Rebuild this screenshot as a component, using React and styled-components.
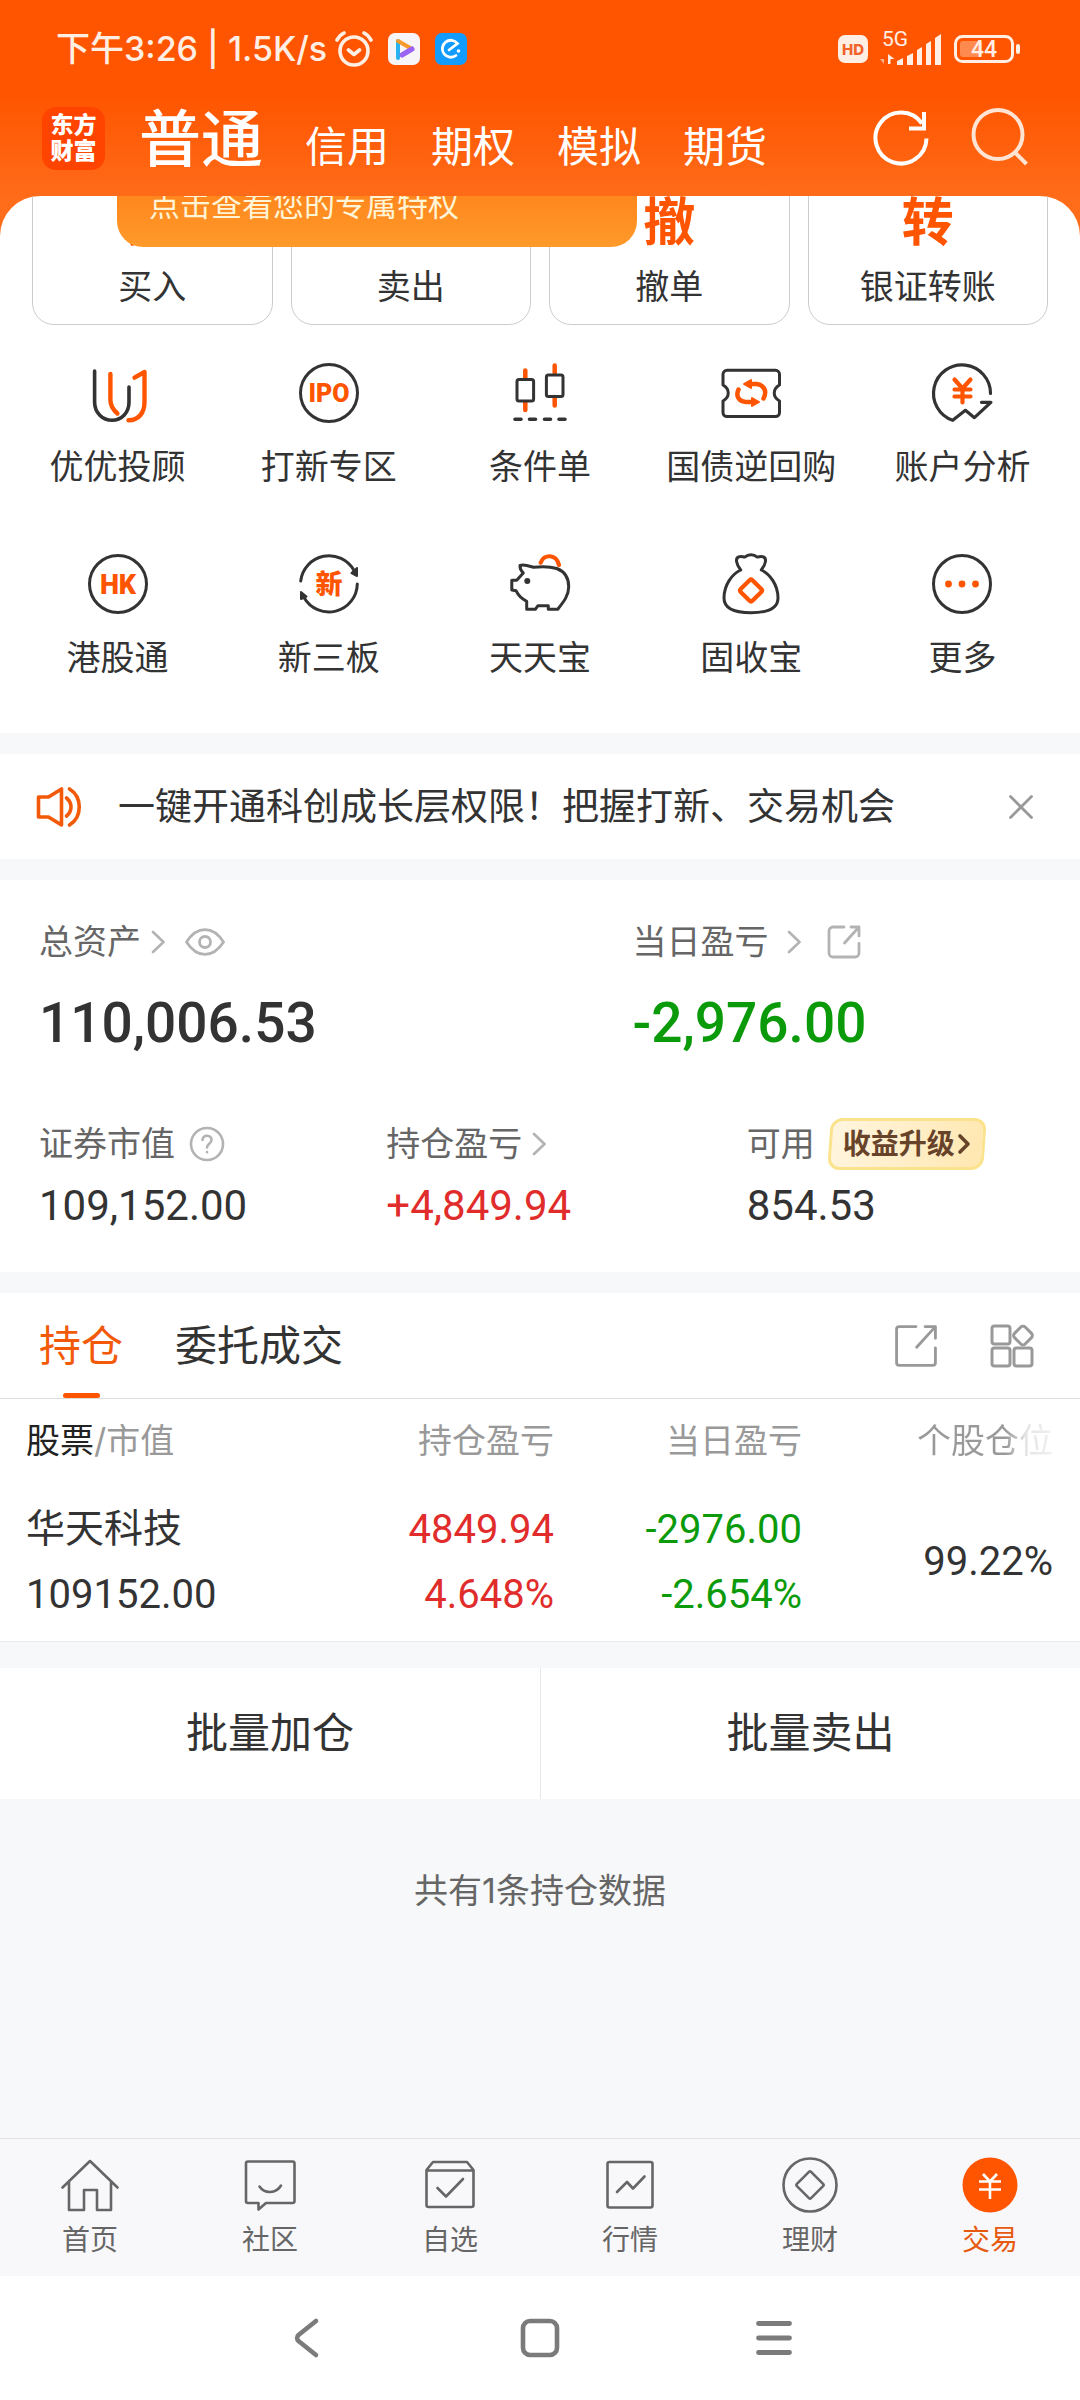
import React from "react";
import styled, { createGlobalStyle } from "styled-components";

const ORANGE = "#ff5500";
const INK = "#333333";
const GREY = "#666666";
const MUTED = "#999999";
const RED = "#e12c2c";
const GREEN = "#0a9a0a";
const NUMERIC = `Roboto, "Noto Sans CJK SC", sans-serif`;

const GlobalStyle = createGlobalStyle`
  * { box-sizing: border-box; }
  body {
    margin: 0;
    background: #f7f8fa;
    color: ${INK};
    font-family: Inter, "Noto Sans CJK SC", sans-serif;
  }
  button {
    margin: 0; padding: 0; border: 0; background: none;
    font: inherit; color: inherit; cursor: pointer;
  }
  a { color: inherit; text-decoration: none; }
  p, h1, h2 { margin: 0; font-weight: 400; }
  svg { display: block; flex: none; }
`;

const Page = styled.div`
  min-height: 100vh;
  display: flex;
  flex-direction: column;
`;

const Top = styled.div`
  background: linear-gradient(#ff5500 0, #ff5500 96px, #ff6c1a 200px, #ff6c1a 100%);
`;

const StatusBar = styled.div`
  height: 98px;
  padding: 0 60px 0 56px;
  display: flex;
  align-items: center;
  justify-content: space-between;
  color: #ffeee4;
  font-size: 34px;
  line-height: 40px;
  font-weight: 500;
`;

const StatusGroup = styled.div`
  display: flex;
  align-items: center;
  gap: ${(p) => p.$gap}px;
`;

const TitleBar = styled.header`
  height: 98px;
  padding: 0 50px 18px 42px;
  display: flex;
  align-items: center;
  color: #fff;
`;

const Logo = styled.a`
  width: 63px;
  height: 63px;
  border-radius: 14px;
  background: #ff4400;
  display: flex;
  align-items: center;
  justify-content: center;
  text-align: center;
  font-size: 23px;
  line-height: 26px;
  font-weight: 900;
`;

const Accounts = styled.nav`
  flex: 1;
  margin-left: 34px;
  padding-top: 10px;
  display: flex;
  align-items: baseline;
  gap: 42px;
  line-height: 80px;
`;

const AccountTab = styled.a`
  font-size: ${(p) => (p.$active ? 62 : 42)}px;
  font-weight: ${(p) => (p.$active ? 500 : 400)};
`;

const HeaderActions = styled.div`
  display: flex;
  gap: 39px;
`;

const Sheet = styled.section`
  position: relative;
  overflow: hidden;
  border-radius: 40px 40px 0 0;
  background: #fff;
  padding-bottom: 53px;
`;

const Promo = styled.a`
  position: absolute;
  top: -35px;
  left: 117px;
  width: 520px;
  height: 86px;
  padding-left: 32px;
  border-radius: 26px;
  background: linear-gradient(#ff7a14, #ff9a2a);
  color: #fff4d6;
  font-size: 31px;
  line-height: 88px;
`;

const TradeRow = styled.div`
  margin-top: -46px;
  padding: 0 32px;
  display: grid;
  grid-template-columns: repeat(4, 1fr);
  gap: 18px;
`;

const TradeCard = styled.button`
  padding: 46px 0 15px;
  border: 1px solid #cccccc;
  border-radius: 22px;
  display: flex;
  flex-direction: column;
  align-items: center;
  gap: 16px;
  font-size: 34px;
  line-height: 44px;
`;

const TradeGlyph = styled.span`
  color: ${ORANGE};
  font-size: 52px;
  line-height: 52px;
  font-weight: 700;
`;

const Shortcuts = styled.div`
  margin-top: 36px;
  padding: 0 12px;
  display: grid;
  grid-template-columns: repeat(5, 1fr);
  row-gap: 63px;
`;

const Shortcut = styled.button`
  display: flex;
  flex-direction: column;
  align-items: center;
  gap: 20px;
  font-size: 34px;
  line-height: 44px;
  white-space: nowrap;
`;

const Notice = styled.section`
  margin-top: 21px;
  height: 105px;
  padding: 0 46px 0 36px;
  display: flex;
  align-items: center;
  gap: 36px;
  background: #fff;
  font-size: 37px;
  line-height: 44px;
`;

const NoticeText = styled.a`
  flex: 1;
`;

const Assets = styled.section`
  margin-top: 21px;
  padding: 40px 40px 44px 39px;
  background: #fff;
`;

const Totals = styled.div`
  display: grid;
  grid-template-columns: 593fr 407fr;
`;

const Details = styled.div`
  margin-top: 67px;
  display: grid;
  grid-template-columns: 347fr 360fr 293fr;
`;

const Label = styled.div`
  height: ${(p) => (p.$tall ? 52 : 44)}px;
  display: flex;
  align-items: center;
  gap: ${(p) => p.$gap || 12}px;
  color: ${GREY};
  font-size: 34px;
  line-height: 44px;
  white-space: nowrap;
`;

const LabelButton = styled.button`
  display: flex;
  align-items: center;
  gap: ${(p) => p.$gap || 10}px;
`;

const Total = styled.p`
  margin-top: 31px;
  color: ${(p) => p.$color || INK};
  font-family: ${NUMERIC};
  font-size: 55px;
  line-height: 56px;
  font-weight: 500;
`;

const Amount = styled.p`
  margin-top: 14px;
  color: ${(p) => p.$color || INK};
  font-family: ${NUMERIC};
  font-size: 42px;
  line-height: 44px;
`;

const UpgradeBadge = styled.button`
  position: relative;
  z-index: 0;
  height: 52px;
  padding: 0 14px;
  display: flex;
  align-items: center;
  gap: 2px;
  color: #67432a;
  font-size: 28px;
  font-weight: 700;
  &::before {
    content: "";
    position: absolute;
    inset: 0;
    z-index: -1;
    border: 3px solid #fbe38e;
    border-radius: 12px;
    background: linear-gradient(100deg, #fff5df, #ffe7b0);
    transform: skewX(-4deg);
  }
`;

const Holdings = styled.section`
  margin-top: 21px;
  background: #fff;
`;

const Tabs = styled.div`
  height: 106px;
  padding: 0 46px 0 39px;
  display: flex;
  align-items: center;
  gap: 52px;
  border-bottom: 1px solid #dddddd;
`;

const Tab = styled.button`
  display: flex;
  flex-direction: column;
  align-items: center;
  color: ${(p) => (p.$active ? "#f25a0a" : INK)};
  font-size: 42px;
  line-height: 105px;
  &::after {
    content: "";
    width: 37px;
    height: 5px;
    margin-top: -5px;
    border-radius: 3px;
    background: ${(p) => (p.$active ? ORANGE : "transparent")};
  }
`;

const TabTools = styled.div`
  margin-left: auto;
  display: flex;
  gap: 52px;
`;

const Table = styled.table`
  width: 100%;
  table-layout: fixed;
  border-collapse: collapse;
  border-bottom: 1px solid #ebebeb;
  text-align: right;
  th {
    height: 84px;
    padding: 0;
    color: ${MUTED};
    font-size: 34px;
    line-height: 44px;
    font-weight: 400;
  }
  td {
    height: 158px;
    padding: 0;
    font-family: ${NUMERIC};
    font-size: 40px;
    line-height: 65px;
  }
  th:first-child, td:first-child { padding-left: 26px; text-align: left; }
  th:last-child, td:last-child { width: 278px; padding-right: 27px; }
`;

const Col = styled.th`
  width: ${(p) => p.$width};
`;

const Strong = styled.span`
  color: #222222;
`;

const Faded = styled.span`
  background: linear-gradient(90deg, ${MUTED} 65%, #e4e4e4 80%, #f0f0f0);
  background-clip: text;
  color: transparent;
`;

const Line = styled.div`
  color: ${(p) => p.$color || INK};
  font-size: ${(p) => (p.$name ? 39 : 40)}px;
`;

const Batch = styled.div`
  margin-top: 26px;
  display: grid;
  grid-template-columns: 1fr 1fr;
  background: #fff;
`;

const BatchButton = styled.button`
  height: 131px;
  font-size: 42px;
  line-height: 44px;
  & + & { border-left: 1px solid #e8e8e8; }
`;

const Summary = styled.p`
  flex: 1;
  padding: 70px 0;
  text-align: center;
  color: ${GREY};
  font-size: 34px;
  line-height: 44px;
`;

const BottomNav = styled.nav`
  padding: 16px 0 19px;
  display: grid;
  grid-template-columns: repeat(6, 1fr);
  border-top: 1px solid #e2e2e4;
  background: #f8f8fa;
`;

const NavItem = styled.a`
  display: flex;
  flex-direction: column;
  align-items: center;
  gap: 8px;
  color: ${(p) => (p.$active ? "#e65a10" : GREY)};
  font-size: 28px;
  line-height: 34px;
`;

const SystemNav = styled.div`
  height: 124px;
  display: flex;
  align-items: center;
  justify-content: center;
  gap: 174px;
  background: #fff;
`;

/* ---------- drawings ---------- */

const Svg = ({ w, h = w, vw = w, vh = h, color = INK, sw = 3, children }) => (
  <svg
    width={w}
    height={h}
    viewBox={`0 0 ${vw} ${vh}`}
    fill="none"
    stroke={color}
    strokeWidth={sw}
    strokeLinecap="round"
    strokeLinejoin="round"
    aria-hidden="true"
  >
    {children}
  </svg>
);

const AlarmIcon = () => (
  <Svg w={38} h={36} color="#ffeee4" sw={3.6}>
    <circle cx="19" cy="20" r="14" />
    <path d="M13.500 19l5.500 4.500 5.500-4.500M2 9c2-3.500 4-5.500 7-7M36 9c-2-3.500-4-5.500-7-7" />
  </Svg>
);

const VideoAppIcon = () => (
  <svg width="32" height="32" viewBox="0 0 32 32" aria-hidden="true">
    <rect width="32" height="32" rx="7" fill="#f7f5f8" />
    <path d="M10 8v17" stroke="#27b4f0" strokeWidth="4" strokeLinecap="round" />
    <path d="M10 8l14 8" stroke="#f79a2c" strokeWidth="4" strokeLinecap="round" />
    <path d="M14 22l10-6" stroke="#9a63f3" strokeWidth="5" strokeLinecap="round" />
  </svg>
);

const EleAppIcon = () => (
  <svg width="32" height="32" viewBox="0 0 32 32" fill="none" aria-hidden="true">
    <rect width="32" height="32" rx="7" fill="#139cff" />
    <path d="M21 22.500A8.500 8.500 0 1 1 22.500 10.500L14 17" stroke="#fff" strokeWidth="2.800" strokeLinecap="round" />
    <circle cx="23.500" cy="18" r="1.800" fill="#fff" />
  </svg>
);

const HdIcon = () => (
  <svg width="30" height="28" viewBox="0 0 30 28" aria-hidden="true">
    <rect width="30" height="28" rx="7" fill="#ffeee4" />
    <text x="15" y="19.500" textAnchor="middle" fontSize="15" fontWeight="800" fill="#f2622a" fontFamily="Inter">HD</text>
  </svg>
);

const SignalIcon = () => (
  <svg width="62" height="42" viewBox="0 -4 62 42" fill="#ffeee4" aria-hidden="true">
    <text x="2" y="14" fontSize="21" fontWeight="400" fontFamily="Roboto">5G</text>
    <path d="M4 22v10l-4-5h4z" opacity="0.600" />
    <path d="M8 22v10h2.500v-5h4z" />
    <path d="M17 29l6-3v7h-6zM27 24l6-3v12h-6zM37 18l5-3v18h-5zM46 12l5-3v24h-5zM55 6l6-4v31h-6z" />
  </svg>
);

const BatteryIcon = () => (
  <svg width="66" height="28" viewBox="0 0 66 28" fill="none" aria-hidden="true">
    <rect x="1.500" y="1.500" width="57" height="25" rx="7" stroke="#ffeee4" strokeWidth="3" />
    <rect x="6" y="6" width="22" height="16" rx="3" fill="#ff8a50" />
    <path d="M64 11v6" stroke="#ffeee4" strokeWidth="4" strokeLinecap="round" />
    <text x="30" y="22" textAnchor="middle" fontSize="23" fontWeight="500" fill="#ffeee4" fontFamily="Roboto">44</text>
  </svg>
);

const RefreshIcon = () => (
  <svg width="60" height="60" viewBox="0 0 60 60" fill="none" stroke="#fff" strokeWidth="4" aria-hidden="true">
    <path d="M55.500 30.500A25.500 25.500 0 1 1 51 15.500" />
    <path d="M53 4v16.500H38" />
  </svg>
);

const SearchIcon = () => (
  <svg width="60" height="60" viewBox="0 0 60 60" fill="none" stroke="#ffe3d3" strokeWidth="4" aria-hidden="true">
    <circle cx="28" cy="26.500" r="24.500" />
    <path d="M44.500 44l12 12" />
  </svg>
);

const YouIcon = () => (
  <Svg w={64} sw={3.6}>
    <path d="M8.600 10v31c0 11 8 18.300 17.400 18.300S43 52 43 41V26" />
    <path d="M24.400 13v26c0 6 3 10 7 13.500M48.500 16.700L58.500 11v30c0 11-6 18.300-16 18.300" stroke={ORANGE} strokeWidth="4.400" />
  </Svg>
);

const IpoIcon = () => (
  <Svg w={64}>
    <circle cx="32" cy="32" r="28.500" />
    <text x="32" y="41" textAnchor="middle" fontSize="25" fontWeight="900" fontFamily="Roboto" fill={ORANGE} stroke="none">IPO</text>
  </Svg>
);

const CandleIcon = () => (
  <Svg w={64}>
    <path d="M17.300 9.500V17M17.300 41v8M46.700 4.500V12M46.700 36v8.500" stroke={ORANGE} strokeWidth="4.500" />
    <rect x="9" y="18.500" width="16.600" height="21.500" rx="2" />
    <rect x="38.400" y="14" width="16.600" height="21.500" rx="2" />
    <path d="M7 58.300h6M21.500 58.300h6M36.500 58.300h6M51 58.300h6" strokeWidth="3.600" />
  </Svg>
);

const TicketIcon = () => (
  <Svg w={64}>
    <path d="M8 9.300h48.500a4 4 0 0 1 4 4V24c-7 4-7 12 0 16v11.500a4 4 0 0 1-4 4H8a4 4 0 0 1-4-4V40c7-4 7-12 0-16V13.300a4 4 0 0 1 4-4z" />
    <path d="M19.500 28.500C16 36 21 41 27 41h6M44.500 37.500C49 29 43.500 23.500 38 23h-5" stroke={ORANGE} strokeWidth="4.500" />
    <path d="M32 19v8l-7-4zM33 37v8l7-4z" fill={ORANGE} stroke={ORANGE} strokeWidth="2" />
  </Svg>
);

const AccountIcon = () => (
  <Svg w={64} sw={3.2}>
    <path d="M60.500 32.500A28.500 28.500 0 1 0 22.700 59.300L35.400 49.300l9 7.400 16.500-15.400H51.500" />
    <path d="M24.500 18.500l8 9 8-9M24.500 28.500h16M24.500 35.500h16M32.500 28v13.500" stroke={ORANGE} strokeWidth="4.200" />
  </Svg>
);

const HkIcon = () => (
  <Svg w={64}>
    <circle cx="32" cy="32" r="28.500" />
    <text x="32" y="41.500" textAnchor="middle" fontSize="27" fontWeight="900" fontFamily="Roboto" fill={ORANGE} stroke="none">HK</text>
  </Svg>
);

const NewBoardIcon = () => (
  <Svg w={64}>
    <path d="M3.700 29A28.500 28.500 0 0 1 57 18.500M60.300 32A28.500 28.500 0 0 1 7 45.500" />
    <path d="M60 16v8l-5.500-3zM4 40v7l5.500-2.500z" fill={INK} strokeWidth="2" />
    <text x="32" y="42" textAnchor="middle" fontSize="27" fontWeight="900" fontFamily="Noto Sans CJK SC" fill={ORANGE} stroke="none">新</text>
  </Svg>
);

const PigIcon = () => (
  <Svg w={64}>
    <path d="M32.700 10.700C36 1.500 48.500 2 51 13" stroke={ORANGE} strokeWidth="4.200" />
    <path d="M12 13.500c4-1.500 9 .500 13.300 1.800 8-1 17-.800 23.400 1.200 8 3 12 10 12 18.200 0 9-5 15-11 22.600h-9.400v-3.600H30l-2.700 3.600h-8.600v-8C14 47 10 43 8 38.700L3.800 38V28.200H8.700L15.300 21c-2-2-3.500-4.500-3.300-7.500z" fill="#fff" />
    <circle cx="19.300" cy="29" r="3" fill={INK} stroke="none" />
  </Svg>
);

const BagIcon = () => (
  <Svg w={64}>
    <path d="M21.700 18C17 12 16 6 20 4.800c2-.800 4 .200 6 .200 3-3 9-3 12 0 2 0 4-1 6-.200C48 6 47 12 42.300 18 51 22 59 33 59 46c0 11-11 14.700-27 14.700S5 57 5 46C5 33 13 22 21.700 18z" />
    <rect x="23.700" y="30.200" width="16.600" height="16.600" rx="2" transform="rotate(45 32 38.500)" stroke={ORANGE} strokeWidth="4.200" />
  </Svg>
);

const MoreIcon = () => (
  <Svg w={64}>
    <circle cx="32" cy="32" r="28.500" />
    <g fill={ORANGE} stroke="none">
      <circle cx="18.500" cy="32" r="3.400" />
      <circle cx="32" cy="32" r="3.400" />
      <circle cx="45.500" cy="32" r="3.400" />
    </g>
  </Svg>
);

const SpeakerIcon = () => (
  <Svg w={46} h={42} color="#f25a0a" sw={3.6}>
    <path d="M2.500 11h10l13-8v36l-13-8h-10zM30.500 12c6 5 6 13 0 18M33.500 3c13 8 13 28 0 36" />
  </Svg>
);

const CloseIcon = () => (
  <Svg w={26} color={MUTED} sw={2.8}>
    <path d="M2.500 2.500l21 21M23.500 2.500l-21 21" />
  </Svg>
);

const Chevron = () => (
  <Svg w={14} h={24} color="#b3b3b3" sw={2.6}>
    <path d="M2 2l10.500 10L2 22" />
  </Svg>
);

const EyeIcon = () => (
  <Svg w={40} h={28} color="#b3b3b3" sw={2.8}>
    <path d="M1.500 14C12-2.500 28-2.500 38.500 14 28 30.500 12 30.500 1.500 14z" />
    <circle cx="20" cy="14" r="5.500" />
  </Svg>
);

const HelpIcon = () => (
  <Svg w={36} color="#b3b3b3" sw={2.6}>
    <circle cx="18" cy="18" r="16" />
    <path d="M13.500 14c.500-6 9-5.500 9 0 0 3.500-4.500 4-4.500 7.500M18 26v.200" />
  </Svg>
);

const ShareIcon = ({ w = 34, color = "#b3b3b3", sw = 2.8, r = 4 }) => (
  <Svg w={w} vw={34} vh={34} color={color} sw={sw}>
    <path d={`M17 2H${2 + r}a${r} ${r} 0 0 0-${r} ${r}V${32 - r}a${r} ${r} 0 0 0 ${r} ${r}H${32 - r}a${r} ${r} 0 0 0 ${r}-${r}V18.500M24 2h8v9M32 2L17.500 18`} />
  </Svg>
);

const LayoutIcon = () => (
  <Svg w={44} color={MUTED} sw={3}>
    <rect x="2" y="2" width="18" height="18" rx="2.500" />
    <rect x="2" y="24" width="18" height="18" rx="2.500" />
    <rect x="24" y="24" width="18" height="18" rx="2.500" />
    <rect x="25.500" y="4" width="15" height="15" rx="3" transform="rotate(45 33 11.500)" />
  </Svg>
);

const BoldChevron = () => (
  <Svg w={14} h={22} color="#67432a" sw={3.6}>
    <path d="M3 3l8 8-8 8" />
  </Svg>
);

const navProps = { w: 60, color: GREY, sw: 2.6 };

const HomeIcon = () => (
  <Svg {...navProps}>
    <path d="M2.500 32.500L30 6l27.500 26.500M9 27v28h15V35h13v20h14V27" />
  </Svg>
);

const ChatIcon = () => (
  <Svg {...navProps}>
    <path d="M8 6.500h44.500a2 2 0 0 1 2 2V46a2 2 0 0 1-2 2H26l-7.500 6.500V48H8a2 2 0 0 1-2-2V8.500a2 2 0 0 1 2-2z" />
    <path d="M19.500 31.500c5 7.500 16.500 7.500 21.500-1" />
  </Svg>
);

const PickIcon = () => (
  <Svg {...navProps}>
    <path d="M6.500 15L13 7h34l6.500 8v35a2 2 0 0 1-2 2h-43a2 2 0 0 1-2-2zM6.500 15.500h47M17.500 33l8.500 8.500 17-17.500" />
  </Svg>
);

const MarketIcon = () => (
  <Svg {...navProps}>
    <rect x="7.500" y="7" width="45" height="45.500" rx="2" />
    <path d="M17 37l10-10 6 6.500 11.500-12" />
  </Svg>
);

const FundIcon = () => (
  <Svg {...navProps}>
    <circle cx="30" cy="30" r="26.500" />
    <rect x="20" y="20" width="20" height="20" rx="1.500" transform="rotate(45 30 30)" />
  </Svg>
);

const TradeIcon = () => (
  <Svg w={60} color="#fff" sw={2.6}>
    <circle cx="30" cy="30" r="27.500" fill={ORANGE} stroke="none" />
    <path d="M23 19l7 7.500 7-7.500M19 26.500h22M19 34.500h22M30 26.500V44" strokeLinecap="butt" />
  </Svg>
);

const BackIcon = () => (
  <Svg w={60} color="#7b7b7b" sw={4.6}>
    <path d="M40 13L22.500 27a4 4 0 0 0 0 6L40 47" />
  </Svg>
);

const HomeKeyIcon = () => (
  <Svg w={60} color="#7b7b7b" sw={4.6}>
    <rect x="13" y="13" width="34" height="34" rx="7" />
  </Svg>
);

const MenuIcon = () => (
  <Svg w={60} color="#7b7b7b" sw={4.8}>
    <path d="M14.500 15.500h31M14.500 30h31M14.500 44.500h31" />
  </Svg>
);

/* ---------- data ---------- */

const accounts = ["普通", "信用", "期权", "模拟", "期货"];
const trades = [["买", "买入"], ["卖", "卖出"], ["撤", "撤单"], ["转", "银证转账"]];
const shortcuts = [
  ["优优投顾", YouIcon],
  ["打新专区", IpoIcon],
  ["条件单", CandleIcon],
  ["国债逆回购", TicketIcon],
  ["账户分析", AccountIcon],
  ["港股通", HkIcon],
  ["新三板", NewBoardIcon],
  ["天天宝", PigIcon],
  ["固收宝", BagIcon],
  ["更多", MoreIcon],
];
const navItems = [
  ["首页", HomeIcon],
  ["社区", ChatIcon],
  ["自选", PickIcon],
  ["行情", MarketIcon],
  ["理财", FundIcon],
  ["交易", TradeIcon],
];

export default function App() {
  return (
    <Page>
      <GlobalStyle />
      <Top>
        <StatusBar>
          <StatusGroup $gap={15}>
            <StatusGroup $gap={8}>
              <span>下午3:26 | 1.5K/s</span>
              <AlarmIcon />
            </StatusGroup>
            <VideoAppIcon />
            <EleAppIcon />
          </StatusGroup>
          <StatusGroup $gap={12}>
            <HdIcon />
            <SignalIcon />
            <BatteryIcon />
          </StatusGroup>
        </StatusBar>
        <TitleBar>
          <Logo href="#home">东方<br />财富</Logo>
          <Accounts>
            {accounts.map((name, i) => (
              <AccountTab key={name} href={`#account-${i}`} $active={i === 0}>{name}</AccountTab>
            ))}
          </Accounts>
          <HeaderActions>
            <button aria-label="刷新"><RefreshIcon /></button>
            <button aria-label="搜索"><SearchIcon /></button>
          </HeaderActions>
        </TitleBar>
        <Sheet>
          <TradeRow>
            {trades.map(([glyph, label]) => (
              <TradeCard key={label}>
                <TradeGlyph>{glyph}</TradeGlyph>
                <span>{label}</span>
              </TradeCard>
            ))}
          </TradeRow>
          <Shortcuts>
            {shortcuts.map(([label, Icon]) => (
              <Shortcut key={label}>
                <Icon />
                <span>{label}</span>
              </Shortcut>
            ))}
          </Shortcuts>
          <Promo href="#privileges">点击查看您的专属特权</Promo>
        </Sheet>
      </Top>

      <Notice>
        <SpeakerIcon />
        <NoticeText href="#notice">一键开通科创成长层权限！把握打新、交易机会</NoticeText>
        <button aria-label="关闭"><CloseIcon /></button>
      </Notice>

      <Assets>
        <Totals>
          <div>
            <Label $gap={20}>
              <LabelButton>总资产<Chevron /></LabelButton>
              <button aria-label="隐藏金额"><EyeIcon /></button>
            </Label>
            <Total>110,006.53</Total>
          </div>
          <div>
            <Label $gap={26}>
              <LabelButton $gap={18}>当日盈亏<Chevron /></LabelButton>
              <button aria-label="分享"><ShareIcon /></button>
            </Label>
            <Total $color={GREEN}>-2,976.00</Total>
          </div>
        </Totals>
        <Details>
          <div>
            <Label $tall $gap={14}>
              证券市值
              <button aria-label="说明"><HelpIcon /></button>
            </Label>
            <Amount>109,152.00</Amount>
          </div>
          <div>
            <Label $tall>
              <LabelButton>持仓盈亏<Chevron /></LabelButton>
            </Label>
            <Amount $color={RED}>+4,849.94</Amount>
          </div>
          <div>
            <Label $tall $gap={14}>
              可用
              <UpgradeBadge>收益升级<BoldChevron /></UpgradeBadge>
            </Label>
            <Amount>854.53</Amount>
          </div>
        </Details>
      </Assets>

      <Holdings>
        <Tabs>
          <Tab $active>持仓</Tab>
          <Tab>委托成交</Tab>
          <TabTools>
            <button aria-label="分享持仓"><ShareIcon w={44} color={MUTED} sw={2.2} r={2} /></button>
            <button aria-label="布局"><LayoutIcon /></button>
          </TabTools>
        </Tabs>
        <Table>
          <thead>
            <tr>
              <Col $width="auto"><Strong>股票</Strong>/市值</Col>
              <Col $width="248px">持仓盈亏</Col>
              <Col $width="248px">当日盈亏</Col>
              <Col $width="278px"><Faded>个股仓位</Faded></Col>
            </tr>
          </thead>
          <tbody>
            <tr>
              <td>
                <Line $name>华天科技</Line>
                <Line>109152.00</Line>
              </td>
              <td>
                <Line $color={RED}>4849.94</Line>
                <Line $color={RED}>4.648%</Line>
              </td>
              <td>
                <Line $color={GREEN}>-2976.00</Line>
                <Line $color={GREEN}>-2.654%</Line>
              </td>
              <td>99.22%</td>
            </tr>
          </tbody>
        </Table>
      </Holdings>

      <Batch>
        <BatchButton>批量加仓</BatchButton>
        <BatchButton>批量卖出</BatchButton>
      </Batch>
      <Summary>共有1条持仓数据</Summary>

      <BottomNav>
        {navItems.map(([label, Icon], i) => (
          <NavItem key={label} href={`#nav-${i}`} $active={i === 5}>
            <Icon />
            <span>{label}</span>
          </NavItem>
        ))}
      </BottomNav>
      <SystemNav>
        <button aria-label="返回"><BackIcon /></button>
        <button aria-label="主屏幕"><HomeKeyIcon /></button>
        <button aria-label="最近任务"><MenuIcon /></button>
      </SystemNav>
    </Page>
  );
}
